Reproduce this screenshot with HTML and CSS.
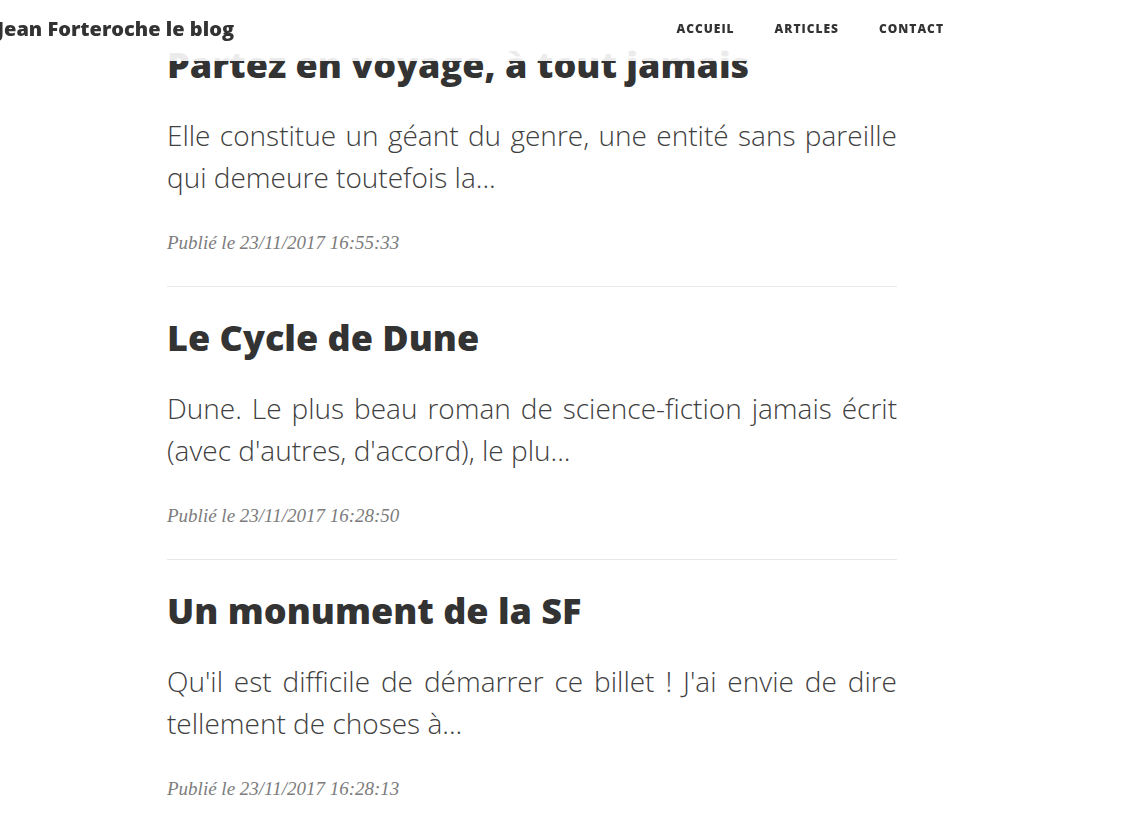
FILE: index.html
```html
<!DOCTYPE html>
<html lang="fr">
<head>
<meta charset="utf-8">
<title>Jean Forteroche le blog</title>
<link rel="stylesheet" href="styles.css">
</head>
<body>
<nav class="navbar">
  <a class="brand" href="#">Jean Forteroche le blog</a>
  <ul class="nav-links">
    <li><a href="#">Accueil</a></li>
    <li><a href="#">Articles</a></li>
    <li><a href="#">Contact</a></li>
  </ul>
</nav>
<main class="posts">
  <hr class="divider">
  <article class="post">
    <h2 class="post-title">Partez en voyage, à tout jamais</h2>
    <h3 class="post-subtitle">Elle constitue un géant du genre, une entité sans pareille qui demeure toutefois la...</h3>
    <p class="post-meta">Publié le 23/11/2017 16:55:33</p>
  </article>
  <hr class="divider">
  <article class="post">
    <h2 class="post-title">Le Cycle de Dune</h2>
    <h3 class="post-subtitle">Dune. Le plus beau roman de science-fiction jamais écrit (avec d'autres, d'accord), le plu...</h3>
    <p class="post-meta">Publié le 23/11/2017 16:28:50</p>
  </article>
  <hr class="divider">
  <article class="post">
    <h2 class="post-title">Un monument de la SF</h2>
    <h3 class="post-subtitle">Qu'il est difficile de démarrer ce billet ! J'ai envie de dire tellement de choses à...</h3>
    <p class="post-meta">Publié le 23/11/2017 16:28:13</p>
  </article>
  <hr class="divider">
</main>
</body>
</html>
```
FILE: styles.css
```css
html, body {
  margin: 0;
  padding: 0;
  background: #fff;
}
body {
  font-family: "Open Sans", "Liberation Sans", sans-serif;
  color: #333;
}
a {
  color: inherit;
  text-decoration: none;
}
.navbar {
  position: fixed;
  top: 0;
  left: 0;
  right: 0;
  height: 61px;
  display: flex;
  align-items: center;
  background: rgba(255, 255, 255, 0.9);
  z-index: 10;
  padding: 0 179px 0 0;
  box-sizing: border-box;
}
.brand {
  margin-left: -3px;
  font-size: 20px;
  font-weight: 800;
  color: #333;
  padding-bottom: 5px;
}
.nav-links {
  display: flex;
  margin: 0 0 0 auto;
  padding: 0;
  list-style: none;
}
.nav-links a {
  display: block;
  padding: 0 20px;
  font-size: 12px;
  font-weight: 800;
  letter-spacing: 1px;
  text-transform: uppercase;
  color: #333;
  padding-bottom: 4px;
}
.posts {
  width: 730px;
  padding: 0 0 0 167px;
  display: flex;
  flex-direction: column;
}
.divider {
  margin: 0;
  border: 0;
  border-top: 1px solid #e8e8e8;
  height: 0;
}
.posts > .divider:first-child {
  margin-top: 13px;
}
.post {
  display: flex;
  flex-direction: column;
  padding: 28.5px 0 29px;
}
.post-title {
  margin: 0 0 28px;
  font-size: 36px;
  font-weight: 800;
  line-height: 1.2;
  color: #333;
}
.post-subtitle {
  margin: 0 0 31px;
  font-size: 28px;
  font-weight: 300;
  line-height: 1.5;
  text-align: justify;
  color: #404040;
}
.post-meta {
  margin: 0;
  font-family: "Liberation Serif", serif;
  font-style: italic;
  font-size: 19px;
  line-height: 1.5;
  color: #7c7c7c;
}
```
